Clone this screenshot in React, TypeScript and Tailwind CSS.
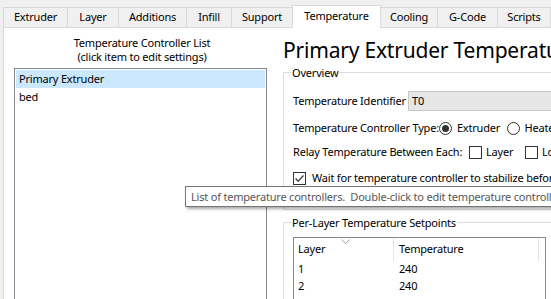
import React from "react";

const tabs = [
  { label: "Extruder", w: "w-[65px]" },
  { label: "Layer", w: "w-[52px]" },
  { label: "Additions", w: "w-[69px]" },
  { label: "Infill", w: "w-[46px]" },
  { label: "Support", w: "w-[62px]" },
  { label: "Temperature", w: "w-[89px]", active: true },
  { label: "Cooling", w: "w-[58px]" },
  { label: "G-Code", w: "w-[61px]" },
  { label: "Scripts", w: "w-[54px]" },
  { label: "Other", w: "w-[50px]" },
];

function GroupBox({ title, children, className }: { title: string; children: React.ReactNode; className?: string }) {
  return (
    <div className={"relative border border-[#dcdcdc] rounded-[2px] " + (className || "")}>
      <span className="absolute left-[7px] top-[-8px] bg-white px-[1px] leading-[15px]">{title}</span>
      {children}
    </div>
  );
}

function Check({ checked }: { checked?: boolean }) {
  return (
    <span className="inline-flex items-center justify-center w-[13px] h-[13px] border border-[#333] bg-white shrink-0">
      {checked && (
        <svg width="11" height="11" viewBox="0 0 11 11">
          <path d="M1.5 5.5 L4.2 8.2 L9.5 2.5" fill="none" stroke="#333" strokeWidth="1.2" />
        </svg>
      )}
    </span>
  );
}

function Radio({ checked }: { checked?: boolean }) {
  return (
    <span className="inline-flex items-center justify-center w-[13px] h-[13px] rounded-full border border-[#333] bg-white shrink-0">
      {checked && <span className="w-[7px] h-[7px] rounded-full bg-[#333]" />}
    </span>
  );
}

export default function App() {
  return (
    <div
      className="relative w-[551px] h-[299px] overflow-hidden bg-[#f0f0f0] text-[11px] tracking-[-0.2px] text-black"
      style={{ fontFamily: '"Noto Sans", "Open Sans", sans-serif' }}
    >
      {/* tab strip */}
      <div className="flex items-end h-[27px] pl-[4px] whitespace-nowrap">
        {tabs.map((t) =>
          t.active ? (
            <div
              key={t.label}
              className={"relative z-10 -ml-px -mb-px h-[23px] border border-b-0 border-[#d9d9d9] bg-white flex items-center justify-center pb-[1px] shrink-0 " + t.w}
            >
              {t.label}
            </div>
          ) : (
            <div
              key={t.label}
              className={"-ml-px h-[20px] border border-b-0 border-[#d9d9d9] bg-[#f0f0f0] flex items-center justify-center shrink-0 " + t.w}
            >
              {t.label}
            </div>
          )
        )}
      </div>

      {/* tab page */}
      <div className="ml-[3px] h-[272px] bg-white border-l border-t border-[#d9d9d9] flex">
        {/* left column */}
        <div className="w-[272px] shrink-0 flex flex-col pt-[8px]">
          <div className="text-center leading-[14px] pl-[4px]">
            <div>Temperature Controller List</div>
            <div>(click item to edit settings)</div>
          </div>
          <div className="ml-[10px] mt-[4px] w-[253px] flex-1 border border-[#828790] border-b-0 p-[1px]">
            <div className="h-[18px] bg-[#cce8ff] pl-[3px] leading-[18px]">Primary Extruder</div>
            <div className="h-[18px] pl-[3px] leading-[18px]">bed</div>
          </div>
        </div>

        {/* right column */}
        <div className="flex-1 pl-[7px] whitespace-nowrap">
          <div className="text-[21px] leading-[24px] mt-[10px] tracking-[-0.2px]">Primary Extruder Temperature Settings</div>

          <GroupBox title="Overview" className="mt-[10px] w-[300px] h-[138px] border-r-0">
            <div className="pl-[9px] pt-[18px] flex flex-col">
              <div className="flex items-center h-[20px]">
                <span className="w-[115px]">Temperature Identifier</span>
                <div className="flex-1 h-[20px] bg-[#e6e6e6] border border-[#c8c8c8] border-r-0 pl-[3px] leading-[18px]">T0</div>
              </div>
              <div className="flex items-center h-[14px] mt-[10px]">
                <span className="w-[149px]">Temperature Controller Type:</span>
                <Radio checked />
                <span className="ml-[5px] w-[56px]">Extruder</span>
                <Radio />
                <span className="ml-[5px]">Heated Bed</span>
              </div>
              <div className="flex items-center h-[14px] mt-[10px]">
                <span className="w-[176px]">Relay Temperature Between Each:</span>
                <Check />
                <span className="ml-[4px] w-[39px]">Layer</span>
                <Check />
                <span className="ml-[4px]">Loop</span>
              </div>
              <div className="flex items-center h-[14px] mt-[12px]">
                <Check checked />
                <span className="ml-[6px]">Wait for temperature controller to stabilize before continuing</span>
              </div>
            </div>
          </GroupBox>

          <GroupBox title="Per-Layer Temperature Setpoints" className="mt-[12px] w-[300px] h-[90px] border-r-0">
            <div className="ml-[9px] mt-[14px] w-[253px] h-[80px] border border-[#828790] relative">
              <div className="flex h-[23px] items-center">
                <div className="relative w-[100px] h-full flex items-center pl-[4px] border-r border-[#e5e5e5]">
                  Layer
                  <svg className="absolute left-[47px] top-[1px]" width="9" height="5" viewBox="0 0 9 5">
                    <path d="M0.5 0.5 L4.5 4.5 L8.5 0.5" fill="none" stroke="#a0a0a0" strokeWidth="1" />
                  </svg>
                </div>
                <div className="w-[145px] h-full flex items-center pl-[5px] border-r border-[#e5e5e5]">Temperature</div>
              </div>
              <div className="flex h-[17px] items-center">
                <div className="w-[100px] pl-[4px]">1</div>
                <div className="pl-[5px]">240</div>
              </div>
              <div className="flex h-[17px] items-center">
                <div className="w-[100px] pl-[4px]">2</div>
                <div className="pl-[5px]">240</div>
              </div>
            </div>
          </GroupBox>
        </div>
      </div>

      {/* tooltip */}
      <div className="absolute left-[185px] top-[186px] h-[21px] pl-[5px] pr-[6px] bg-white border border-[#767676] leading-[19px] whitespace-nowrap shadow-[2px_2px_3px_rgba(0,0,0,0.35)] text-[#575757]">
        List of temperature controllers.&nbsp; Double-click to edit temperature controller settings.
      </div>
    </div>
  );
}
